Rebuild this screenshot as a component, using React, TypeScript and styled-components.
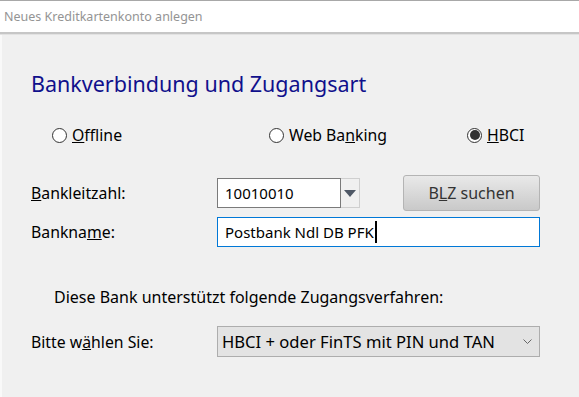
import React from 'react';
import styled, { createGlobalStyle } from 'styled-components';

const Global = createGlobalStyle`
    html, body {
        margin: 0;
        padding: 0;
        background: #f0f0f0;
    }
    body {
        font-family: "Noto Sans", "Open Sans", sans-serif;
    }
`

const Window = styled.div`
    width: 579px;
    height: 397px;
    display: flex;
    flex-direction: column;
    overflow: hidden;
    background: #f0f0f0;
`

const TitleBar = styled.div`
    height: 31px;
    border-top: 1px solid #a8a8a8;
    background: #fff;
    display: flex;
    align-items: center;
    padding-left: 4px;
    color: #949494;
    font-size: 12.5px;
`

const Separator = styled.div`
    height: 1px;
    border-top: 2px solid #c6c6c6;
    background: #e2e2e2;
`

const Panel = styled.div`
    flex: 1;
    border-left: 2px solid #f9f9f9;
    padding: 34px 39px 0 29px;
    color: #000;
    font-size: 15.8px;
`

const Heading = styled.h1`
    margin: 0 0 26px;
    font-weight: normal;
    font-size: 21.5px;
    line-height: 30px;
    color: #10108c;
`

const RadioRow = styled.div`
    display: grid;
    grid-template-columns: 217px 198px auto;
    padding-left: 21px;
    margin-bottom: 30px;
`

const RadioItem = styled.label`
    display: flex;
    align-items: center;
    gap: 5px;
    line-height: 20px;
`

const RadioDot = styled.span<{ $checked?: boolean }>`
    box-sizing: border-box;
    width: 15px;
    height: 15px;
    border-radius: 50%;
    border: 1px solid #333;
    background: #fff;
    position: relative;
    flex: none;

    &::after {
        content: "";
        display: ${p => (p.$checked ? 'block' : 'none')};
        position: absolute;
        inset: 1.5px;
        border-radius: 50%;
        background: #333;
    }
`

const FormGrid = styled.div`
    display: grid;
    grid-template-columns: 186px 1fr;
    align-items: center;
    row-gap: 6px;
`

const Label = styled.div`
    line-height: 20px;
`

const FieldRow = styled.div`
    display: flex;
    align-items: center;
    justify-content: space-between;
`

const Combo = styled.div`
    display: flex;
    height: 30px;
`

const TextBox = styled.div<{ $focused?: boolean; $width?: string }>`
    box-sizing: border-box;
    height: 30px;
    width: ${p => p.$width ?? 'auto'};
    border: 1px solid ${p => (p.$focused ? '#0078d7' : '#7a7a7a')};
    background: #fff;
    display: flex;
    align-items: center;
    padding-left: 7px;
    font-size: 15px;
`

const Caret = styled.span`
    display: inline-block;
    width: 2px;
    height: 22px;
    background: #000;
    margin-left: 1px;
`

const DropButton = styled.div`
    box-sizing: border-box;
    width: 19px;
    height: 30px;
    border: 1px solid #cfcfcf;
    border-left: none;
    display: flex;
    justify-content: center;
    padding-top: 11px;
`

const Button = styled.div`
    box-sizing: border-box;
    width: 137px;
    height: 36px;
    border: 1px solid #b4b4b4;
    border-radius: 3px;
    background: linear-gradient(#e9e9e9, #c9c9c9);
    display: flex;
    align-items: center;
    justify-content: center;
    color: #333;
    font-size: 16px;
`

const Note = styled.div`
    padding-left: 23px;
    margin: 40px 0 19px;
    line-height: 20px;
    font-size: 16px;
`

const Select = styled.div`
    box-sizing: border-box;
    height: 31px;
    border: 1px solid #adadad;
    background: #e3e3e3;
    display: flex;
    align-items: center;
    justify-content: space-between;
    padding: 0 7px 0 4px;
    font-size: 16.6px;
`

export default function App() {
    return (
        <Window>
            <Global/>
            <TitleBar>Neues Kreditkartenkonto anlegen</TitleBar>
            <Separator/>
            <Panel>
                <Heading>Bankverbindung und Zugangsart</Heading>
                <RadioRow>
                    <RadioItem><RadioDot/><span><u>O</u>ffline</span></RadioItem>
                    <RadioItem><RadioDot/><span>Web Ba<u>n</u>king</span></RadioItem>
                    <RadioItem><RadioDot $checked/><span><u>H</u>BCI</span></RadioItem>
                </RadioRow>
                <FormGrid>
                    <Label><u>B</u>ankleitzahl:</Label>
                    <FieldRow>
                        <Combo>
                            <TextBox $width="124px">10010010</TextBox>
                            <DropButton>
                                <svg width="12" height="7" viewBox="0 0 12 7">
                                    <path d="M0 0H12L6 7Z" fill="#4f5866"/>
                                </svg>
                            </DropButton>
                        </Combo>
                        <Button>B<u>L</u>Z suchen</Button>
                    </FieldRow>
                    <Label>Bankna<u>m</u>e:</Label>
                    <TextBox $focused>Postbank Ndl DB PFK<Caret/></TextBox>
                </FormGrid>
                <Note>Diese Bank unterstützt folgende Zugangsverfahren:</Note>
                <FormGrid>
                    <Label>Bitte w<u>ä</u>hlen Sie:</Label>
                    <Select>
                        <span>HBCI + oder FinTS mit PIN und TAN</span>
                        <svg width="9" height="5" viewBox="0 0 9 5">
                            <path d="M0.5 0.5L4.5 4.5L8.5 0.5" fill="none" stroke="#666" strokeWidth="1"/>
                        </svg>
                    </Select>
                </FormGrid>
            </Panel>
        </Window>
    );
}
